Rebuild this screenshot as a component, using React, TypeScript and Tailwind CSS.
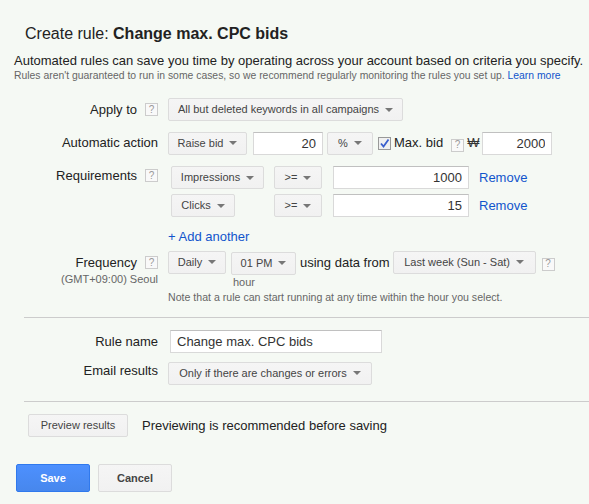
import React from 'react';

const btn =
  'inline-flex items-center justify-center h-[23px] px-[12px] border border-[#dcdcdc] rounded-[2px] bg-gradient-to-b from-[#f5f5f5] to-[#f1f1f1] text-[11px] text-[#444] whitespace-nowrap';
const input =
  'h-[23px] border border-[#d9d9d9] border-t-[#c0c0c0] bg-white px-[6px] text-[13px] text-[#333] outline-none';

function Caret() {
  return <span className="ml-[6px] inline-block w-0 h-0 border-x-[4px] border-x-transparent border-t-[4px] border-t-[#777]" />;
}

function Help() {
  return (
    <span className="inline-flex items-center justify-center w-[13px] h-[13px] border border-[#ccc] bg-[#f9f9f9] text-[10px] leading-none text-[#999]">
      ?
    </span>
  );
}

function Drop({ label, w }: { label: string; w?: string }) {
  return (
    <button className={`${btn} ${w ?? ''}`}>
      {label}
      <Caret />
    </button>
  );
}

function Label({ text, help }: { text: string; help?: boolean }) {
  return (
    <div className="w-[158px] shrink-0 flex justify-end items-center gap-[8px] text-[13px] text-[#222]">
      <span>{text}</span>
      {help && <Help />}
    </div>
  );
}

export default function App() {
  return (
    <div
      className="w-[589px] h-[504px] bg-[#f5f9f4] overflow-hidden text-[#222]"
      style={{ fontFamily: '"Liberation Sans", Arial, sans-serif' }}
    >
      <h1 className="pl-[25px] pt-[25px] text-[16px] leading-[18px] text-[#222]">
        Create rule: <span className="font-bold">Change max. CPC bids</span>
      </h1>

      <p className="pl-[14px] mt-[10px] text-[13px] leading-[16px] text-[#222] whitespace-nowrap">
        Automated rules can save you time by operating across your account based on criteria you specify.
      </p>
      <p className="pl-[14px] text-[10.4px] leading-[14px] text-[#666] whitespace-nowrap">
        Rules aren't guaranteed to run in some cases, so we recommend regularly monitoring the rules you set up.{' '}
        <a className="text-[#1155cc]">Learn more</a>
      </p>

      {/* Apply to */}
      <div className="flex items-center gap-[10px] mt-[15px]">
        <Label text="Apply to" help />
        <Drop label="All but deleted keywords in all campaigns" w="w-[235px]" />
      </div>

      {/* Automatic action */}
      <div className="flex items-center gap-[10px] mt-[10px]">
        <Label text="Automatic action" />
        <div className="flex items-center">
          <Drop label="Raise bid" w="w-[79px]" />
          <input className={`${input} text-right w-[70px] ml-[6px]`} defaultValue="20" />
          <Drop label="%" w="w-[46px] ml-[4px]" />
          <span className="ml-[5px] inline-flex items-center justify-center w-[13px] h-[13px] border border-[#999] bg-[#f0f0f0]">
            <svg width="11" height="11" viewBox="0 0 11 11">
              <path d="M2 5.5 L4.5 8.5 L9.5 1.5" fill="none" stroke="#3a5fcd" strokeWidth="1.8" />
            </svg>
          </span>
          <span className="ml-[3px] text-[13px] text-[#222]">Max. bid</span>
          <span className="ml-[8px]">
            <Help />
          </span>
          <span className="ml-[3px] text-[13px] text-[#333]">₩</span>
          <input className={`${input} text-right w-[70px] ml-[3px]`} defaultValue="2000" />
        </div>
      </div>

      {/* Requirements */}
      <div className="flex items-start gap-[10px] mt-[11px]">
        <Label text="Requirements" help />
        <div className="flex flex-col gap-[5px] pl-[3px]">
          <div className="flex items-center">
            <Drop label="Impressions" w="w-[93px]" />
            <Drop label=">=" w="w-[48px] ml-[10px]" />
            <input className={`${input} text-right w-[136px] ml-[11px]`} defaultValue="1000" />
            <a className="ml-[10px] text-[13px] text-[#1155cc]">Remove</a>
          </div>
          <div className="flex items-center">
            <Drop label="Clicks" w="w-[64px]" />
            <Drop label=">=" w="w-[48px] ml-[39px]" />
            <input className={`${input} text-right w-[136px] ml-[11px]`} defaultValue="15" />
            <a className="ml-[10px] text-[13px] text-[#1155cc]">Remove</a>
          </div>
        </div>
      </div>

      <div className="pl-[168px] mt-[12px] text-[13px] leading-[16px] text-[#1155cc]">+ Add another</div>

      {/* Frequency */}
      <div className="flex items-start gap-[10px] mt-[5px]">
        <div className="w-[158px] shrink-0 flex flex-col items-end pt-[3px]">
          <div className="flex items-center gap-[8px] text-[13px] text-[#222]">
            <span>Frequency</span>
            <Help />
          </div>
          <span className="text-[11px] leading-[13px] text-[#666]">(GMT+09:00) Seoul</span>
        </div>
        <div className="flex flex-col">
          <div className="flex items-center">
            <Drop label="Daily" w="w-[58px]" />
            <div className="ml-[5px] relative">
              <Drop label="01 PM" w="w-[65px]" />
              <span className="absolute left-[2px] top-[24px] text-[11px] text-[#666]">hour</span>
            </div>
            <span className="ml-[4px] text-[13px] text-[#222]">using data from</span>
            <Drop label="Last week (Sun - Sat)" w="w-[143px] ml-[3px]" />
            <span className="ml-[6px]">
              <Help />
            </span>
          </div>
          <p className="mt-[15px] text-[10.6px] leading-[14px] text-[#666] whitespace-nowrap">
            Note that a rule can start running at any time within the hour you select.
          </p>
        </div>
      </div>

      <div className="ml-[24px] mt-[13px] border-t border-[#ccc]" />

      <div className="flex items-center gap-[10px] mt-[12px]">
        <Label text="Rule name" />
        <input className={`${input} text-left h-[22px] w-[212px] ml-[2px] px-[5px]`} defaultValue="Change max. CPC bids" />
      </div>

      <div className="flex items-center gap-[10px] mt-[9px]">
        <div className="-mt-[5px]">
          <Label text="Email results" />
        </div>
        <Drop label="Only if there are changes or errors" w="w-[204px]" />
      </div>

      <div className="ml-[24px] mt-[16px] border-t border-[#ccc]" />

      <div className="flex items-center pl-[28px] mt-[12px]">
        <button className={`${btn} w-[100px]`}>Preview results</button>
        <span className="ml-[14px] text-[13px] text-[#222]">Previewing is recommended before saving</span>
      </div>

      <div className="flex items-center pl-[16px] mt-[27px] gap-[8px]">
        <button className="w-[74px] h-[28px] rounded-[2px] border border-[#3079ed] bg-gradient-to-b from-[#4d90fe] to-[#4787ed] text-[11px] font-bold text-white">
          Save
        </button>
        <button className="w-[74px] h-[28px] rounded-[2px] border border-[#dcdcdc] bg-gradient-to-b from-[#f5f5f5] to-[#f1f1f1] text-[11px] font-bold text-[#444]">
          Cancel
        </button>
      </div>
    </div>
  );
}
